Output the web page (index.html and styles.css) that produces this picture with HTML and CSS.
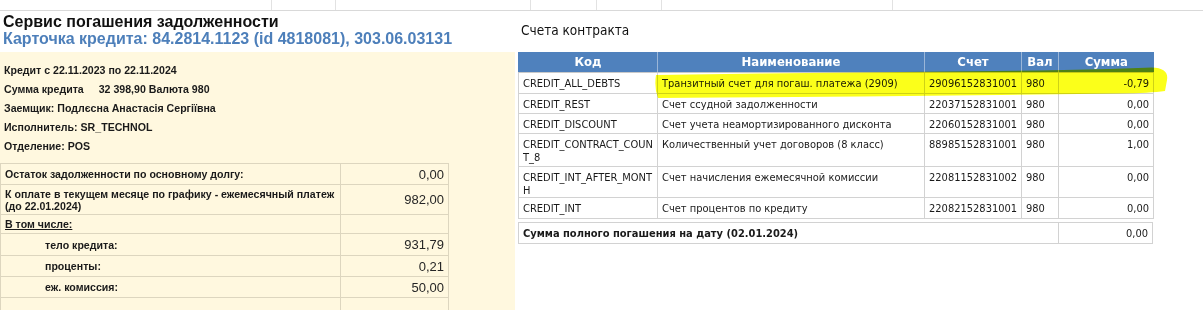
FILE: index.html
```html
<!DOCTYPE html>
<html lang="ru">
<head>
<meta charset="utf-8">
<title>Сервис погашения задолженности</title>
<link rel="stylesheet" href="styles.css">
</head>
<body>
<div class="topbar">
  <div class="tcell w1"></div>
  <div class="tcell w2"></div>
  <div class="tcell w3"></div>
  <div class="tcell w4"></div>
  <div class="tcell w5"></div>
  <div class="tcell w6"></div>
  <div class="tcell wrest"></div>
</div>
<div class="main">
  <div class="leftcol">
    <div class="head">
      <div class="h1">Сервис погашения задолженности</div>
      <div class="h2">Карточка кредита: 84.2814.1123 (id 4818081), 303.06.03131</div>
    </div>
    <div class="panel">
      <div class="info">
        <div class="line">Кредит с 22.11.2023 по 22.11.2024</div>
        <div class="line">Сумма кредита <span class="gap">32 398,90 Валюта 980</span></div>
        <div class="line">Заемщик: Подлєсна Анастасія Сергіївна</div>
        <div class="line">Исполнитель: SR_TECHNOL</div>
        <div class="line">Отделение: POS</div>
      </div>
      <table class="ltab">
        <tr><td class="lab">Остаток задолженности по основному долгу:</td><td class="val">0,00</td></tr>
        <tr class="two"><td class="lab">К оплате в текущем месяце по графику - ежемесячный платеж<br>(до 22.01.2024)</td><td class="val">982,00</td></tr>
        <tr class="sub"><td class="lab"><u>В том числе:</u></td><td class="val"></td></tr>
        <tr class="tall"><td class="lab ind">тело кредита:</td><td class="val">931,79</td></tr>
        <tr><td class="lab ind">проценты:</td><td class="val">0,21</td></tr>
        <tr><td class="lab ind">еж. комиссия:</td><td class="val">50,00</td></tr>
        <tr><td class="lab"></td><td class="val"></td></tr>
      </table>
    </div>
  </div>
  <div class="rightcol">
    <div class="rtitle">Счета контракта</div>
    <table class="rtab">
      <colgroup><col class="c1"><col class="c2"><col class="c3"><col class="c4"><col class="c5"></colgroup>
      <tr><th>Код</th><th>Наименование</th><th>Счет</th><th>Вал</th><th>Сумма</th></tr>
      <tr class="ra"><td>CREDIT_ALL_DEBTS</td><td>Транзитный счет для погаш. платежа (2909)</td><td>29096152831001</td><td>980</td><td class="num">-0,79</td></tr>
      <tr class="rb"><td>CREDIT_REST</td><td>Счет ссудной задолженности</td><td>22037152831001</td><td>980</td><td class="num">0,00</td></tr>
      <tr class="rb"><td>CREDIT_DISCOUNT</td><td>Счет учета неамортизированного дисконта</td><td>22060152831001</td><td>980</td><td class="num">0,00</td></tr>
      <tr class="rc"><td>CREDIT_CONTRACT_COUN<br>T_8</td><td>Количественный учет договоров (8 класс)</td><td>88985152831001</td><td>980</td><td class="num">1,00</td></tr>
      <tr class="rd"><td>CREDIT_INT_AFTER_MONT<br>H</td><td>Счет начисления ежемесячной комиссии</td><td>22081152831002</td><td>980</td><td class="num">0,00</td></tr>
      <tr class="ra"><td>CREDIT_INT</td><td>Счет процентов по кредиту</td><td>22082152831001</td><td>980</td><td class="num">0,00</td></tr>
    </table>
    <table class="ttab">
      <tr><td class="tlab">Сумма полного погашения на дату (02.01.2024)</td><td class="num">0,00</td></tr>
    </table>
  </div>
</div>
<svg class="marker" width="1203" height="310" viewBox="0 0 1203 310" aria-hidden="true">
  <path d="M656,75 L760,73.5 L900,72 L1040,70.5 L1110,69 L1152,67.5 Q1169,68 1167,80 L1165,91 Q1150,93 1120,93.5 L1000,95 L860,96.5 L720,97.5 L658,98 Q654,88 656,75 Z" fill="#fbff1a"/>
</svg>
</body>
</html>
```
FILE: styles.css
```css
html, body {
  margin: 0;
  padding: 0;
  background: #ffffff;
}
body {
  position: relative;
  width: 1203px;
  height: 310px;
  overflow: hidden;
  font-family: "Liberation Sans", Arial, sans-serif;
  color: #111;
}
.topbar {
  display: flex;
  height: 10px;
  border-bottom: 1px solid #d9d9d9;
}
.tcell {
  border-right: 1px solid #e2e2e2;
  box-sizing: border-box;
}
.w1 { width: 272px; }
.w2 { width: 64px; }
.w3 { width: 195px; }
.w4 { width: 66px; }
.w5 { width: 65px; }
.w6 { width: 231px; }
.wrest { flex: 1; border-right: none; }

.main {
  display: flex;
  height: 299px;
  overflow: hidden;
}
.leftcol {
  width: 515px;
  display: flex;
  flex-direction: column;
}
.head {
  padding: 2px 3px 5px 3px;
  height: 34px;
}
.h1, .h2 {
  font-size: 16px;
  font-weight: bold;
  line-height: 17px;
  white-space: nowrap;
}
.h1 { color: #111; }
.h2 { color: #4d7fba; }
.panel {
  flex: 1;
  background: #fff8df;
  padding-top: 9px;
  overflow: hidden;
}
.info {
  padding-left: 4px;
}
.line {
  font-size: 10.6px;
  font-weight: bold;
  line-height: 19px;
  color: #1a1a1a;
  white-space: nowrap;
}
.gap { margin-left: 12px; }

.ltab {
  margin-top: 7px;
  width: 449px;
  border-collapse: collapse;
  border: 1px solid #ddd6bf;
  table-layout: fixed;
}
.ltab td {
  border: 1px solid #ddd6bf;
  height: 20px;
  padding: 0;
  vertical-align: middle;
}
.ltab tr.two td { height: 29px; }
.ltab tr.sub td { height: 18px; }
.ltab tr.tall td { height: 21px; }
.ltab .lab {
  width: 335px;
  padding-left: 4px;
  font-size: 10.6px;
  font-weight: bold;
  line-height: 12px;
  color: #1a1a1a;
  white-space: nowrap;
}
.ltab .ind { padding-left: 44px; width: 295px; }
.ltab .val {
  text-align: right;
  padding-right: 4px;
  font-size: 13px;
  color: #262626;
}

.rightcol {
  flex: 1;
  padding-left: 3px;
}
.rtitle {
  margin-top: 11px;
  margin-bottom: 14px;
  padding-left: 3px;
  font-family: "DejaVu Sans Condensed", "Liberation Sans", sans-serif;
  font-size: 13.5px;
  line-height: 16px;
  color: #111;
}
.rtab, .ttab {
  width: 635px;
  border-collapse: collapse;
  table-layout: fixed;
  font-family: "DejaVu Sans Condensed", "Liberation Sans", sans-serif;
  font-size: 11px;
  color: #1a1a1a;
}
.c1 { width: 139px; }
.c2 { width: 267px; }
.c3 { width: 97px; }
.c4 { width: 37px; }
.c5 { width: 95px; }
.rtab th {
  background: #4f81bd;
  color: #ffffff;
  font-weight: bold;
  font-size: 13px;
  height: 20px;
  padding: 0;
  line-height: 14px;
  border-left: 1px solid #9bb6d8;
  border-bottom: 1px solid #c9c9c9;
}
.rtab th:first-child { border-left: 1px solid #4f81bd; }
.rtab td {
  border: 1px solid #d2d2d2;
  padding: 4px 4px 0 4px;
  vertical-align: top;
  line-height: 13px;
  white-space: nowrap;
  box-sizing: border-box;
}
.rtab tr.ra td { height: 21px; }
.rtab tr.rb td { height: 20px; }
.rtab tr.rc td { height: 33px; }
.rtab tr.rd td { height: 31px; }
.rtab td.num, .ttab td.num {
  text-align: right;
}
.ttab {
  margin-top: 3px;
}
.ttab td {
  border: 1px solid #d2d2d2;
  height: 21px;
  padding: 0 4px;
  vertical-align: middle;
  box-sizing: border-box;
}
.ttab .tlab {
  width: 540px;
  font-weight: bold;
}

.marker {
  position: absolute;
  left: 0;
  top: 0;
  pointer-events: none;
  mix-blend-mode: multiply;
}
```
